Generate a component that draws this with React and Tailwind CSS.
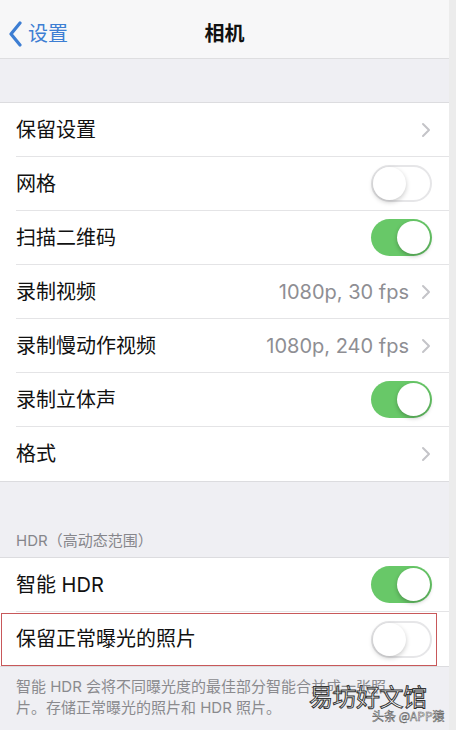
const font = { fontFamily: 'Inter, "Noto Sans CJK SC", sans-serif' };

const section1 = [
  { label: '保留设置', type: 'link' },
  { label: '网格', type: 'toggle', on: false },
  { label: '扫描二维码', type: 'toggle', on: true },
  { label: '录制视频', type: 'link', value: '1080p, 30 fps' },
  { label: '录制慢动作视频', type: 'link', value: '1080p, 240 fps' },
  { label: '录制立体声', type: 'toggle', on: true },
  { label: '格式', type: 'link' },
];

function Chevron() {
  return (
    <svg width="10" height="16" viewBox="0 0 10 16" className="flex-shrink-0">
      <path d="M2 2l6 6-6 6" fill="none" stroke="#c4c4c8" strokeWidth="2" strokeLinecap="round" strokeLinejoin="round" />
    </svg>
  );
}

function Toggle({ on }) {
  return (
    <div
      className={
        on
          ? 'w-[61px] h-[37px] rounded-full bg-[#68c868] flex items-center justify-end p-[2px] flex-shrink-0'
          : 'w-[61px] h-[37px] rounded-full bg-white border-2 border-[#e6e6e8] flex items-center justify-start flex-shrink-0'
      }
    >
      <div
        className={
          on
            ? 'w-[33px] h-[33px] rounded-full bg-white shadow-[0_2px_4px_rgba(0,0,0,0.25)]'
            : 'w-[33px] h-[33px] rounded-full bg-white shadow-[0_2px_5px_rgba(0,0,0,0.22)]'
        }
      />
    </div>
  );
}

function Row({ item, last }) {
  return (
    <div className="pl-4 bg-white">
      <div
        className={
          last
            ? 'h-[54px] flex items-center justify-between pr-[17px]'
            : 'h-[54px] flex items-center justify-between pr-[17px] border-b border-[#e4e4e6]'
        }
      >
        <span className="text-[20px] text-[#111]">{item.label}</span>
        {item.type === 'toggle' ? (
          <Toggle on={item.on} />
        ) : (
          <div className="flex items-center gap-3 pr-[1px]">
            {item.value && <span className="text-[20px] text-[#8e8e93]">{item.value}</span>}
            <Chevron />
          </div>
        )}
      </div>
    </div>
  );
}

export default function App() {
  return (
    <div className="w-[456px] h-[730px] flex bg-[#efeff3] overflow-hidden relative" style={font}>
      <div className="w-[449px] flex flex-col">
        {/* Nav */}
        <div className="h-[59px] pt-[9px] bg-[#f7f7f8] border-b border-[#dedee0] flex items-center relative flex-shrink-0">
          <div className="flex items-center pl-[8px] gap-[5px]">
            <svg width="15" height="26" viewBox="0 0 15 26">
              <path d="M12 2L3 13l9 11" fill="none" stroke="#3d7ed3" strokeWidth="3.2" strokeLinecap="round" strokeLinejoin="round" />
            </svg>
            <span className="text-[20px] text-[#3d7ed3]">设置</span>
          </div>
          <div className="absolute inset-0 pt-[9px] flex items-center justify-center pointer-events-none">
            <span className="text-[20px] font-semibold text-[#111]">相机</span>
          </div>
        </div>

        <div className="h-[43px] flex-shrink-0" />

        <div className="border-y border-[#dcdcdf]">
          {section1.map((item, i) => (
            <Row key={item.label} item={item} last={i === section1.length - 1} />
          ))}
        </div>

        <div className="h-[75px] flex items-end pl-4 pb-[5px] flex-shrink-0">
          <span className="text-[15px] text-[#86868b]">HDR（高动态范围）</span>
        </div>

        <div className="border-y border-[#dcdcdf] relative">
          <Row item={{ label: '智能 HDR', type: 'toggle', on: true }} />
          <Row item={{ label: '保留正常曝光的照片', type: 'toggle', on: false }} last />
          <div className="absolute left-[1px] top-[55px] w-[436px] h-[53px] border-[1.5px] border-[#c8585a] pointer-events-none" />
        </div>

        <div className="pl-4 pt-[9px] text-[15px] leading-[21px] text-[#8a8a8e] whitespace-nowrap">
          <div>智能 HDR 会将不同曝光度的最佳部分智能合并成一张照</div>
          <div>片。存储正常曝光的照片和 HDR 照片。</div>
        </div>
      </div>
      <div className="w-[7px] bg-[#ececec]" />

      {/* watermark */}
      <div className="absolute left-[309px] top-[681px] flex flex-col items-end whitespace-nowrap">
        <span
          className="text-[24px] leading-[30px] text-white tracking-[-0.5px]"
          style={{ WebkitTextStroke: '1px #333', fontFamily: '"Noto Sans CJK SC", sans-serif' }}
        >
          易坊好文馆
        </span>
        <span
          className="text-[12px] leading-[14px] text-white mr-[-18px] mt-[-2px]"
          style={{ WebkitTextStroke: '0.5px #555', fontFamily: '"Noto Sans CJK SC", sans-serif' }}
        >
          头条 @APP猿
        </span>
      </div>
    </div>
  );
}
